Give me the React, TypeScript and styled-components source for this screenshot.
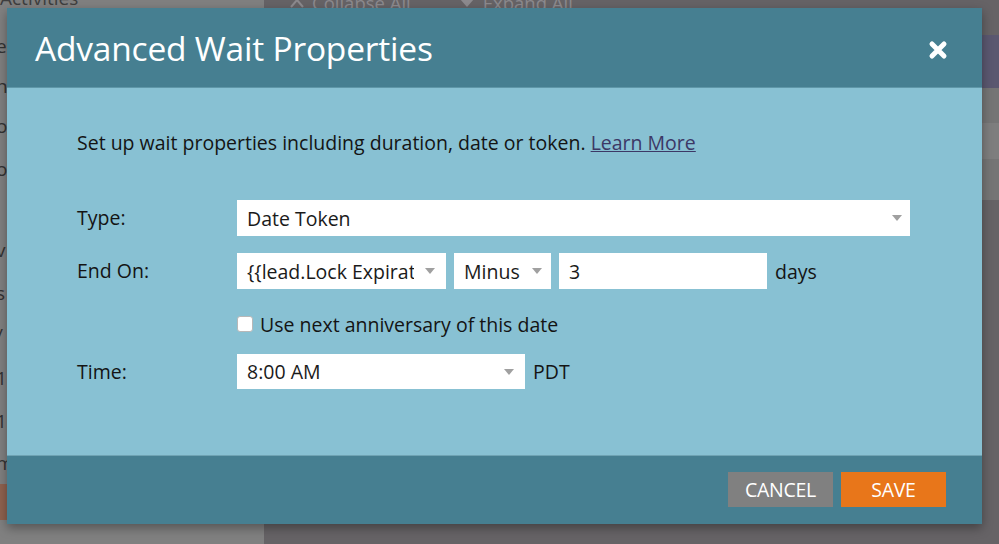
import styled, { createGlobalStyle } from 'styled-components';

const GlobalStyle = createGlobalStyle`
  html, body {
    margin: 0;
    padding: 0;
    width: 999px;
    height: 544px;
    overflow: hidden;
    font-family: 'Open Sans', 'Liberation Sans', sans-serif;
  }
  * { box-sizing: border-box; }
`;

const Page = styled.div`
  position: relative;
  display: flex;
  width: 999px;
  height: 544px;
  overflow: hidden;
`;

const Sidebar = styled.div`
  width: 264px;
  flex-shrink: 0;
  background: #808080;
  display: flex;
  flex-direction: column;
`;

const SidebarTitle = styled.div`
  height: 40px;
  margin-top: -14px;
  font-size: 19px;
  color: #3e3e3e;
  line-height: 24px;
`;

const SidebarItem = styled.div<{ $h: number }>`
  height: ${p => p.$h}px;
  display: flex;
  align-items: center;
  margin-left: -4px;
  font-size: 19px;
  color: #333;
  white-space: nowrap;
`;

const SidebarButton = styled.div`
  height: 36px;
  width: 120px;
  margin-left: -40px;
  background: #8f624f;
  color: #b59a8e;
  display: flex;
  align-items: center;
  padding-left: 48px;
  font-size: 19px;
`;

const Main = styled.div`
  flex: 1;
  background: #666366;
  display: flex;
  flex-direction: column;
`;

const Toolbar = styled.div`
  height: 35px;
  display: flex;
  align-items: flex-start;
  gap: 48px;
  padding-left: 26px;
  color: #8c8a8e;
  font-size: 18.5px;
`;

const ToolItem = styled.div`
  display: flex;
  align-items: center;
  gap: 8px;
  margin-top: -10px;
`;

const Band = styled.div<{ $bg: string; $h: number }>`
  height: ${p => p.$h}px;
  background: ${p => p.$bg};
`;

const Modal = styled.div`
  position: absolute;
  left: 7px;
  top: 8px;
  width: 975px;
  height: 516px;
  display: flex;
  flex-direction: column;
  box-shadow: 0 4px 10px rgba(0, 0, 0, 0.35);
`;

const Header = styled.div`
  height: 80px;
  background: #467f91;
  display: flex;
  align-items: center;
  justify-content: space-between;
  padding: 0 34px 0 28px;
  border-bottom: 1px solid #5f97a8;
`;

const Title = styled.h1`
  margin: 0;
  font-size: 33.5px;
  font-weight: 400;
  color: #fff;
  letter-spacing: -0.2px;
`;

const CloseButton = styled.button`
  border: 0;
  background: none;
  padding: 0;
  margin-top: 5px;
  width: 20px;
  height: 20px;
  display: flex;
  cursor: pointer;
`;

const Body = styled.div`
  flex: 1;
  background: #88c1d3;
  padding: 42px 0 0 70px;
  color: #141414;
`;

const Intro = styled.p`
  margin: 0 0 44px;
  font-size: 19.5px;
  line-height: 26px;
`;

const LearnMore = styled.a`
  color: #3c3866;
  text-decoration: underline;
  cursor: pointer;
`;

const Row = styled.div<{ $mt?: number }>`
  display: grid;
  grid-template-columns: 160px 1fr;
  align-items: center;
  margin-top: ${p => p.$mt ?? 0}px;
`;

const Label = styled.label`
  font-size: 19.5px;
  line-height: 26px;
`;

const Fields = styled.div`
  display: flex;
  align-items: center;
  gap: 8px;
  font-size: 19.5px;
`;

const Select = styled.div<{ $w: number; $h?: number; $pr: number }>`
  position: relative;
  width: ${p => p.$w}px;
  height: ${p => p.$h ?? 36}px;
  background: #fff;
  display: flex;
  align-items: center;
  padding: 0 ${p => p.$pr}px 0 10px;
  color: #1a1a1a;
  overflow: hidden;
`;

const SelectText = styled.span`
  flex: 1;
  min-width: 0;
  overflow: hidden;
  white-space: nowrap;
  font-size: 19.5px;
`;

const Caret = styled.span<{ $r: number }>`
  position: absolute;
  right: ${p => p.$r}px;
  top: 50%;
  margin-top: -3px;
  width: 0;
  height: 0;
  border-left: 5px solid transparent;
  border-right: 5px solid transparent;
  border-top: 6px solid #a0a0a0;
`;

const TextInput = styled.div`
  width: 208px;
  height: 36px;
  background: #fff;
  display: flex;
  align-items: center;
  padding-left: 10px;
  font-size: 19.5px;
  color: #1a1a1a;
`;

const CheckRow = styled.div`
  display: flex;
  align-items: center;
  gap: 7px;
  margin: 22px 0 0 160px;
  height: 26px;
  font-size: 19.5px;
`;

const Checkbox = styled.span`
  width: 16px;
  height: 16px;
  border-radius: 3px;
  background: #fff;
  border: 1px solid #b8b8b8;
`;

const Footer = styled.div`
  height: 69px;
  background: #467f91;
  border-top: 1px solid #6fa3b3;
  display: flex;
  justify-content: flex-end;
  align-items: flex-start;
  gap: 8px;
  padding: 16px 36px 0 0;
`;

const Button = styled.button<{ $bg: string }>`
  width: 105px;
  height: 35px;
  border: 0;
  background: ${p => p.$bg};
  color: #fff;
  font-family: 'Open Sans', 'Liberation Sans', sans-serif;
  font-size: 19.5px;
  text-transform: uppercase;
  letter-spacing: -0.3px;
  cursor: pointer;
`;

const sideItems: [string, number][] = [
  ['ee', 40], ['n,', 40], ['o', 40], ['ol', 46], ['', 36], ['v', 44], ['s', 42], ['/', 42], ['1', 44], ['1', 42], ['m', 42],
];

export default function App() {
  return (
    <>
      <GlobalStyle />
      <Page>
        <Sidebar>
          <SidebarTitle>Activities</SidebarTitle>
          {sideItems.map(([t, h], i) => (
            <SidebarItem key={i} $h={h}>{t}</SidebarItem>
          ))}
          <SidebarButton>r</SidebarButton>
        </Sidebar>
        <Main>
          <Toolbar>
            <ToolItem>
              <svg width="14" height="10" viewBox="0 0 14 10"><path d="M1 9 L7 2 L13 9" fill="none" stroke="#8c8a8e" strokeWidth="2" /></svg>
              Collapse All
            </ToolItem>
            <ToolItem>
              <svg width="16" height="10" viewBox="0 0 16 10"><path d="M1 1 H15 L8 9 Z" fill="#8c8a8e" /></svg>
              Expand All
            </ToolItem>
          </Toolbar>
          <Band $bg="#5b5870" $h={53} />
          <Band $bg="#757575" $h={35} />
          <Band $bg="#7e7e7e" $h={36} />
          <Band $bg="#757575" $h={41} />
        </Main>

        <Modal>
          <Header>
            <Title>Advanced Wait Properties</Title>
            <CloseButton aria-label="Close">
              <svg width="20" height="20" viewBox="0 0 20 20">
                <path d="M4 4 L16 16 M16 4 L4 16" stroke="#fff" strokeWidth="5" strokeLinecap="round" />
              </svg>
            </CloseButton>
          </Header>
          <Body>
            <Intro>
              Set up wait properties including duration, date or token. <LearnMore>Learn More</LearnMore>
            </Intro>
            <Row>
              <Label>Type:</Label>
              <Fields>
                <Select $w={673} $pr={30}><SelectText>Date Token</SelectText><Caret $r={8} /></Select>
              </Fields>
            </Row>
            <Row $mt={17}>
              <Label>End On:</Label>
              <Fields>
                <Select $w={209} $pr={32}><SelectText>{'{{lead.Lock Expiration Date}}'}</SelectText><Caret $r={11} /></Select>
                <Select $w={97} $pr={26}><SelectText>Minus</SelectText><Caret $r={9} /></Select>
                <TextInput>3</TextInput>
                <span>days</span>
              </Fields>
            </Row>
            <CheckRow>
              <Checkbox />
              Use next anniversary of this date
            </CheckRow>
            <Row $mt={17}>
              <Label>Time:</Label>
              <Fields>
                <Select $w={288} $h={35} $pr={30}><SelectText>8:00 AM</SelectText><Caret $r={11} /></Select>
                <span>PDT</span>
              </Fields>
            </Row>
          </Body>
          <Footer>
            <Button $bg="#808080">Cancel</Button>
            <Button $bg="#e8761a">Save</Button>
          </Footer>
        </Modal>
      </Page>
    </>
  );
}
